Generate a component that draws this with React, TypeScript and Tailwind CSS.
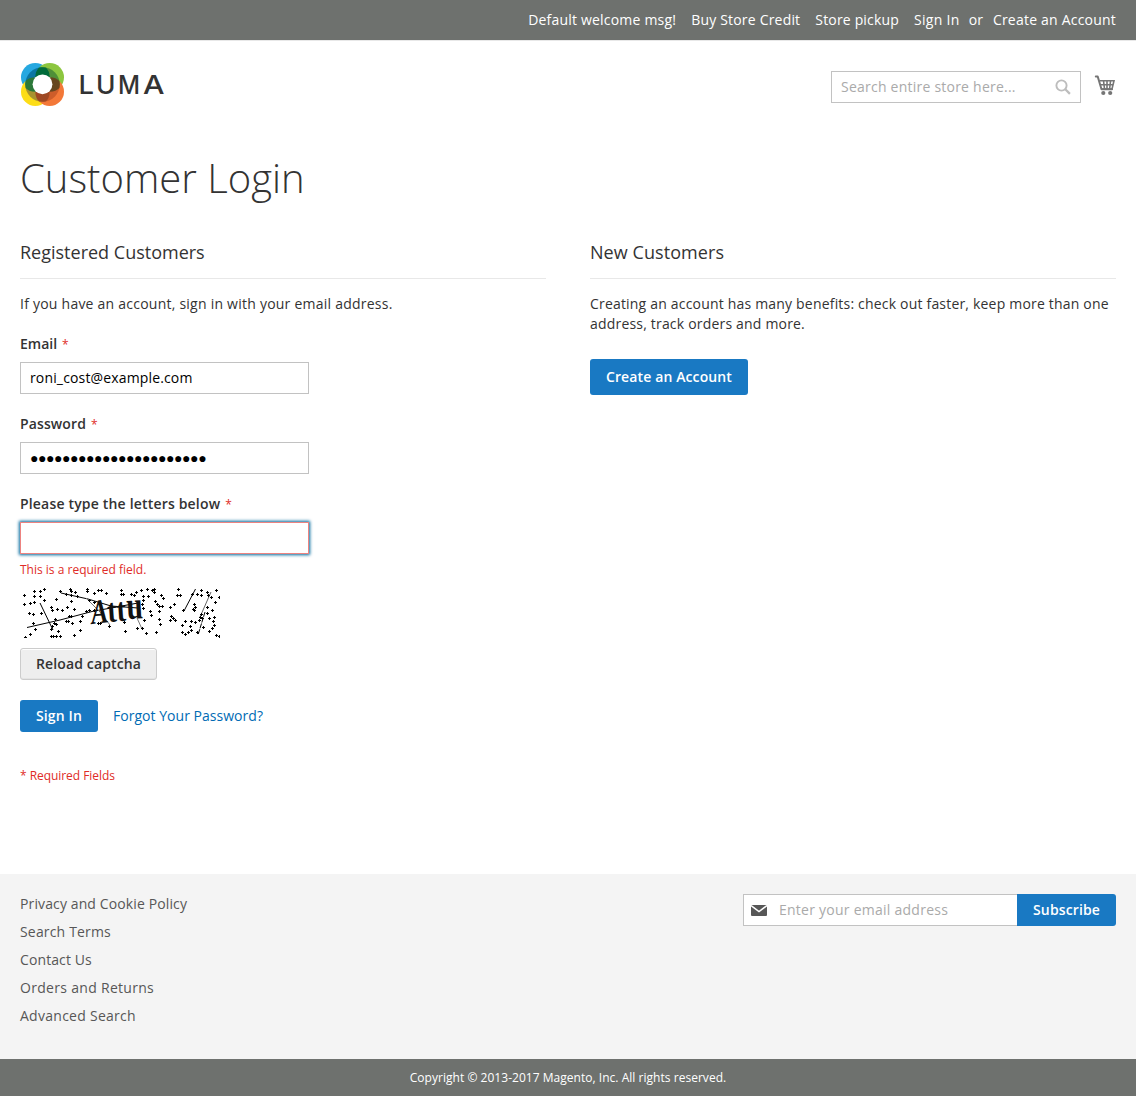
import React from "react";
import type { ReactNode } from "react";

const DOTS_LEFT = [
  [74,34],[90,34],[102,27],[42,46],[74,49],[90,50],[43,73],[61,70],[73,67],[103,60],[57,99],[69,103],[94,100],[70,130],[75,148],[62,162],[45,173],[151,34],[184,46],[183,34],[195,37],[202,49],[138,58],[185,65],[172,82],[193,88],[125,82],[128,92],[141,88],[158,90],[178,108],[185,108],[135,117],[168,123],[174,124],[187,130],[132,130],[138,132],[145,154],[124,148],[125,168],[129,169],[140,170],[151,170],[193,166],[211,150],[212,124],[217,108],[228,93],[238,92],[231,34],[233,27],[253,40],[266,31],[273,31],[290,40],[237,60],[253,68],[264,131],[270,130],[298,139],[252,92],[170,42],[182,28],[126,138],
];
const DOTS_RIGHT = [
  [34,31],[34,44],[39,44],[65,43],[74,45],[80,37],[95,30],[112,27],[126,32],[134,27],[133,38],[101,50],[115,50],[135,64],[143,73],[148,79],[158,80],[161,56],[153,46],[101,60],[98,74],[101,85],[120,93],[124,107],[147,95],[149,117],[152,134],[103,122],[43,126],[46,153],[82,146],[97,145],[110,159],[138,158],[181,82],[194,72],[180,121],[189,114],[196,120],[184,110],[201,46],[211,46],[205,27],[246,44],[262,43],[274,31],[275,45],[293,38],[320,32],[327,52],[305,53],[317,68],[252,72],[257,82],[249,88],[221,90],[292,82],[308,92],[292,99],[313,113],[313,135],[309,125],[299,114],[273,102],[270,112],[268,122],[256,126],[243,123],[240,139],[227,124],[216,136],[218,157],[227,162],[235,158],[245,152],[281,142],[307,144],[262,156],[319,167],[327,170],[297,155],[277,115],[254,92],[296,45],
];

function Captcha() {
  return (
    <svg className="block h-[50px] w-[200px] overflow-hidden" viewBox="0 0 200 50" aria-label="Captcha">
      <g stroke="#000" fill="none" strokeWidth="1">
        <path d="M41 5 68 11 91 18 118 20" />
        <path d="M7 39.500 40 32 72 23.500 118 15" />
        <path d="M20 15 33 42" />
        <path d="M164.500 22 175.500 1" />
        <path d="M191 4 180 29" stroke="#666" />
        <path d="M185 24 178 47" strokeDasharray="5 1" />
        <path d="M66 10 80 24 90 37 M117 30 122 41" stroke="#777" />
      </g>
      <g fill="#000">
        {DOTS_LEFT.map(([x, y], i) => (
          <path key={i} transform={`translate(${Math.floor(x / 3 - 10)} ${Math.floor(y / 3 - 8)})`} d="M-1 0h3v1h-3zM0-1h1v3h-1z" />
        ))}
        {DOTS_RIGHT.map(([x, y], i) => (
          <path key={i} transform={`translate(${Math.floor(x / 3 + 90)} ${Math.floor(y / 3 - 8)})`} d="M-1 0h3v1h-3zM0-1h1v3h-1z" />
        ))}
      </g>
      <g fontFamily="Liberation Serif, serif" fill="#111">
        <text transform="translate(72 36) rotate(-6) scale(.8 1.08)" fontSize="32" fontStyle="italic" fontWeight="700">A</text>
        <text transform="translate(88 34) rotate(-4) scale(.95 1.15)" fontSize="29" fontWeight="700">tt</text>
        <text transform="translate(107 31) rotate(-3) scale(1.05 1.4)" fontSize="28" fontWeight="700">u</text>
      </g>
    </svg>
  );
}

function Logo() {
  return (
    <svg className="block h-[43px] w-[145px]" viewBox="0 0 145 43" aria-label="LUMA">
      <defs>
        <clipPath id="ring"><circle cx="22.500" cy="21.500" r="17.300" /></clipPath>
      </defs>
      <circle cx="15.300" cy="14.300" r="14.300" fill="#26a8e0" />
      <circle cx="29.700" cy="14.300" r="14.300" fill="#8cc63f" />
      <circle cx="15.300" cy="28.700" r="14.300" fill="#fddd17" />
      <circle cx="29.700" cy="28.700" r="14.300" fill="#f37838" />
      <g clipPath="url(#ring)">
        <path d="M0 0h22.500v21.500H0z" fill="#0b76a3" />
        <path d="M22.500 0H45v21.500H22.500z" fill="#4f8f38" />
        <path d="M0 21.500h22.500V43H0z" fill="#a8932f" />
        <path d="M22.500 21.500H45V43H22.500z" fill="#cd5d2a" />
        <path d="M22.500 1.900a14.300 14.300 0 0 1 0 24.800 14.300 14.300 0 0 1 0-24.800z" fill="#006b3a" />
        <path d="M22.500 16.300a14.300 14.300 0 0 1 0 24.800 14.300 14.300 0 0 1 0-24.800z" fill="#9f4923" />
        <path d="M2.900 21.500a14.300 14.300 0 0 1 24.800 0 14.300 14.300 0 0 1-24.800 0z" fill="#2b7839" />
        <path d="M17.300 21.500a14.300 14.300 0 0 1 24.800 0 14.300 14.300 0 0 1-24.800 0z" fill="#67471f" />
      </g>
      <circle cx="22.500" cy="21.300" r="9.900" fill="#fff" />
      <g fontFamily="Inter, sans-serif" fontSize="26" fontWeight="500" fill="#333">
        <text x="58.500" y="30.500" textLength="15.500" lengthAdjust="spacingAndGlyphs">L</text>
        <text x="76" y="30.500" textLength="19.500" lengthAdjust="spacingAndGlyphs">U</text>
        <text x="98" y="30.500" textLength="22" lengthAdjust="spacingAndGlyphs">M</text>
        <text x="123" y="30.500" textLength="21.500" lengthAdjust="spacingAndGlyphs">A</text>
      </g>
    </svg>
  );
}

function CartIcon() {
  return (
    <svg className="block h-[22px] w-[22px]" viewBox="0 0 22 22" aria-label="My Cart">
      <path d="M1.800 2.500h1.900L7.500 15.300H18" fill="none" stroke="#757575" strokeWidth="2" strokeLinecap="round" strokeLinejoin="round" />
      <path d="M5.700 6.800H20L18 15H7.700M6.500 10.800H19M9.500 6.500l1 8.500M13 6.500V15M16.600 6.500 15.600 15" fill="none" stroke="#757575" strokeWidth="1.600" />
      <circle cx="9.300" cy="19" r="2.100" fill="#757575" />
      <circle cx="16.200" cy="19" r="2.100" fill="#757575" />
    </svg>
  );
}

function Label({ children }: { children: ReactNode }) {
  return (
    <label className="mb-2 block h-5 font-semibold">
      {children}<span className="ml-[5px] text-[12px] font-normal tracking-normal text-[#e02b27]">*</span>
    </label>
  );
}

const inputBase = "block h-8 border border-[#c2c2c2] bg-white px-[9px] pb-0.5 text-[14px] leading-5 outline-none";

export default function App() {
  return (
    <div className="flex min-h-[1096px] w-full flex-col bg-white font-['Open_Sans','Noto_Sans',sans-serif] text-[14px] leading-5 text-[#333]">
      <nav className="flex h-10 items-center justify-end bg-[#6e716e] px-5 text-white">
        <span className="tracking-[0.2px]">Default welcome msg!</span>
        <a className="ml-[15px] tracking-[0.19px]">Buy Store Credit</a>
        <a className="ml-[15px] tracking-[0.17px]">Store pickup</a>
        <a className="ml-[15px] tracking-[0.32px]">Sign In</a>
        <span className="ml-[9px]">or</span>
        <a className="ml-[10px] tracking-[0.21px]">Create an Account</a>
      </nav>
      <header className="flex h-[67px] items-start justify-between border-t border-[#e8e8e8] pr-5 pl-5">
        <div className="pt-[22px]"><Logo /></div>
        <div className="flex pt-[30px]">
          <div className="flex h-8 w-[250px] items-center border border-[#c2c2c2] pr-[9px] pl-[9px]">
            <input className="min-w-0 flex-1 leading-5 tracking-[0.23px] outline-none placeholder:text-[#aaa]" placeholder="Search entire store here..." />
            <svg className="h-4 w-4" viewBox="0 0 16 16" fill="none" stroke="#bdbdbd">
              <circle cx="6.500" cy="6.500" r="5.100" strokeWidth="1.900" />
              <path d="m10.300 10.300 4.600 4.600" strokeWidth="2.300" />
            </svg>
          </div>
          <div className="ml-[13px] pt-[3px]"><CartIcon /></div>
        </div>
      </header>
      <main className="h-[767px] px-5 pt-[49px]">
        <h1 className="text-[40px] leading-11 font-light">Customer Login</h1>
        <div className="mt-10 flex justify-between">
          <section className="w-[526px]">
            <h2 className="mb-[15px] h-[39px] border-b border-[#e8e8e8] pt-0.5 text-[18px] leading-5">Registered Customers</h2>
            <p className="mb-5 tracking-[0.235px]">If you have an account, sign in with your email address.</p>
            <Label>Email</Label>
            <input className={`${inputBase} mb-5 w-[289px] tracking-[0.15px] text-black`} defaultValue="roni_cost@example.com" />
            <Label><span className="tracking-[0.12px]">Password</span></Label>
            <input className={`${inputBase} mb-5 w-[289px] tracking-[-0.45px] text-black`} defaultValue="●●●●●●●●●●●●●●●●●●●●●●" />
            <Label><span className="tracking-[0.18px]">Please type the letters below</span></Label>
            <input className="block h-8 w-[289px] border border-[#ed8380] bg-white px-[9px] shadow-[0_0_3px_1px_#00699d] outline-none" />
            <p className="mt-[7px] mb-[10px] text-[12px] leading-[17px] text-[#e02b27]">This is a required field.</p>
            <Captcha />
            <button className="mt-[10px] block h-8 w-[137px] rounded-[3px] border border-[#ccc] bg-[#eee] font-semibold tracking-[0.14px] shadow-[inset_0_1px_0_0_#fff,inset_0_-1px_0_0_rgba(204,204,204,0.3)]">Reload captcha</button>
            <div className="mt-5 flex items-center">
              <button className="h-8 w-[78px] rounded-[3px] bg-[#1979c3] font-semibold tracking-[0.14px] text-white">Sign In</button>
              <a className="ml-[15px] tracking-[0.03px] text-[#006bb4]">Forgot Your Password?</a>
            </div>
            <p className="mt-[35px] text-[12px] leading-[17px] tracking-[-0.05px] text-[#e02b27]">* Required Fields</p>
          </section>
          <section className="w-[526px]">
            <h2 className="mb-[15px] h-[39px] border-b border-[#e8e8e8] pt-0.5 text-[18px] leading-5 tracking-[0.07px]">New Customers</h2>
            <p className="tracking-[0.19px]">Creating an account has many benefits: check out faster, keep more than one address, track orders and more.</p>
            <button className="mt-[25px] h-9 w-[158px] rounded-[3px] bg-[#1979c3] font-semibold tracking-[0.12px] text-white">Create an Account</button>
          </section>
        </div>
      </main>
      <footer className="flex h-[185px] justify-between bg-[#f4f4f4] px-5 pt-5 text-[#575757]">
        <ul className="flex flex-col gap-2">
          <li className="tracking-[0.12px]">Privacy and Cookie Policy</li>
          <li className="tracking-[0.17px]">Search Terms</li>
          <li className="tracking-[0.1px]">Contact Us</li>
          <li className="tracking-[0.3px]">Orders and Returns</li>
          <li className="tracking-[0.27px]">Advanced Search</li>
        </ul>
        <form className="flex h-8">
          <div className="flex w-[274px] items-center border border-r-0 border-[#c2c2c2] bg-white pl-[7px]">
            <svg className="h-[11px] w-4 shrink-0" viewBox="0 0 16 11">
              <rect width="16" height="11" rx="1" fill="#575757" />
              <path d="M0 .5 8 6.500 16 .5" fill="none" stroke="#fff" strokeWidth="1.500" />
            </svg>
            <input className="ml-3 min-w-0 flex-1 leading-5 tracking-[0.25px] outline-none placeholder:text-[#aaa]" placeholder="Enter your email address" />
          </div>
          <button type="button" className="w-[99px] rounded-r-[3px] bg-[#1979c3] font-semibold tracking-[0.12px] text-white">Subscribe</button>
        </form>
      </footer>
      <div className="flex h-[37px] items-center justify-center bg-[#6e716e] text-[12px] leading-4 tracking-[0.03px] text-white">Copyright © 2013-2017 Magento, Inc. All rights reserved.</div>
    </div>
  );
}
